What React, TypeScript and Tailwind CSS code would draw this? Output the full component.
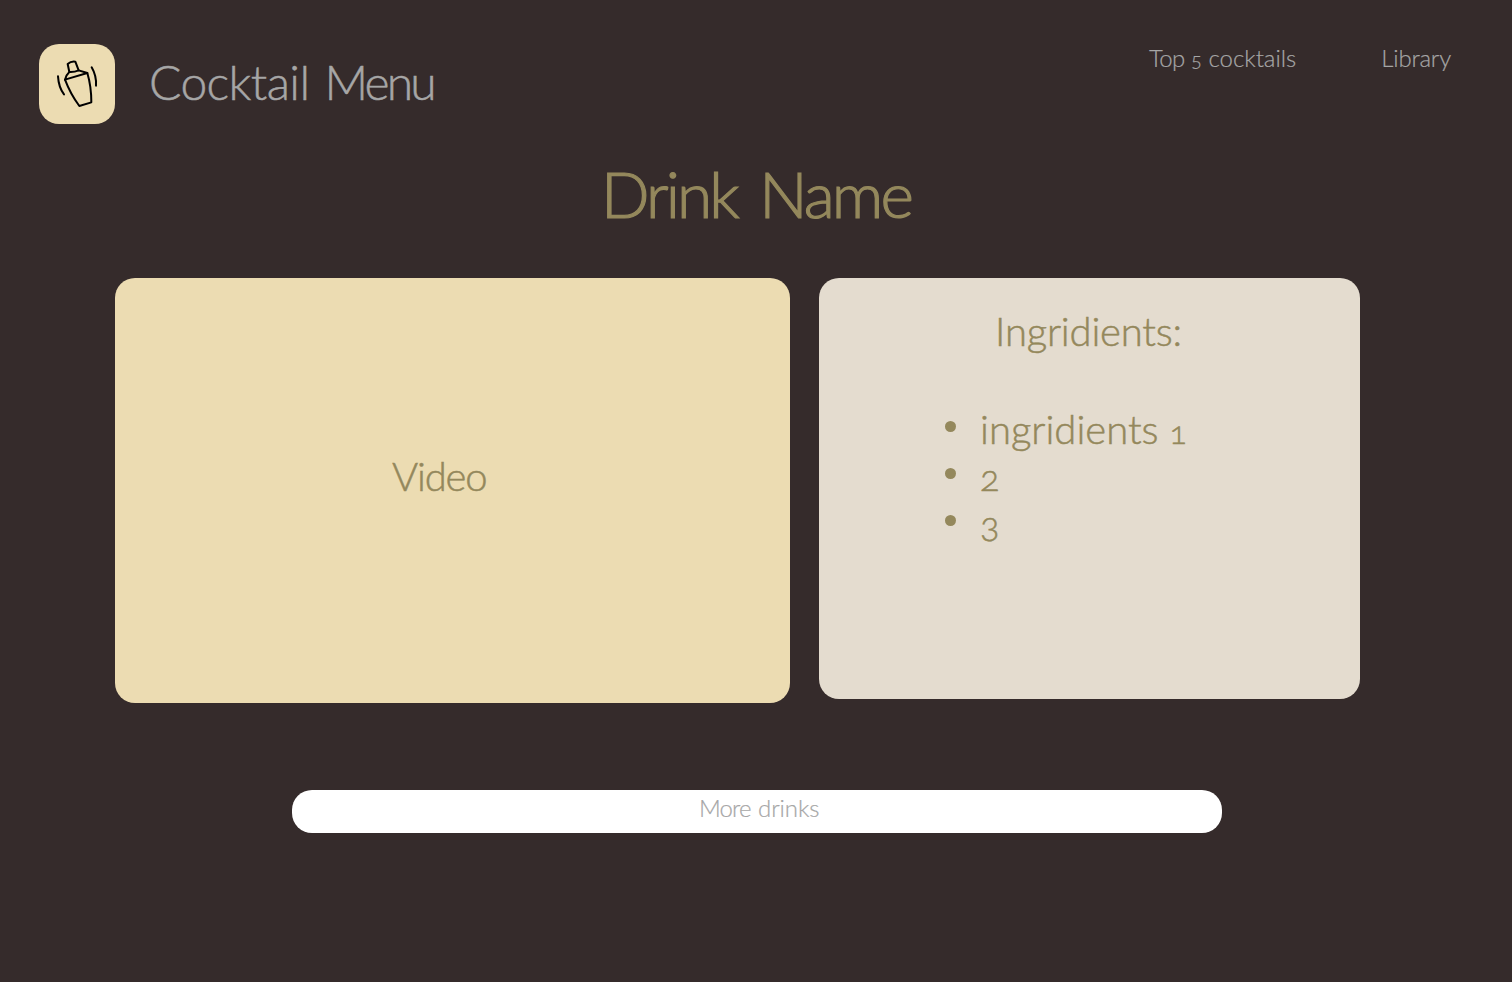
function ShakerIcon() {
  return (
    <svg viewBox="0 0 150 168" className="h-14 w-[50px]" fill="none" stroke="#000" strokeWidth="6" strokeLinecap="round" strokeLinejoin="round">
      <path d="M52 48 L47 24 Q57 15 70 17 L80 43" />
      <path d="M52 48 Q67 49 80 43 L106 51 L39 71 Q43 56 52 48" />
      <path d="M39 71 C50 100 64 126 82 150 L118 139 C118 105 114 78 106 51" />
      <path d="M18 61 Q20 94 36 115" />
      <path d="M119 34 Q134 60 132 89" />
    </svg>
  );
}

const ingredients = ["2", "3"];

export default function App() {
  return (
    <div className="min-h-[982px] w-full overflow-hidden bg-[#352b2b] font-['Lato',sans-serif] font-light whitespace-nowrap oldstyle-nums">
      <header className="flex items-start pt-11 pr-[61px] pl-[39px] text-[#a6a6a6]">
        <div className="flex h-20 w-[76px] items-start rounded-[20px] bg-[#ecdcb2] pt-3 pl-[13px]">
          <ShakerIcon />
        </div>
        <div className="mt-2.5 ml-[34px] text-5xl leading-[56px] [word-spacing:2px] [-webkit-text-stroke:0.5px_#a6a6a6]">
          <span className="tracking-[-0.6px]">Cocktail</span> <span className="tracking-[-2.8px]">Menu</span>
        </div>
        <nav className="ml-auto flex gap-[85px] text-2xl leading-7 [-webkit-text-stroke:0.2px_#a6a6a6]">
          <a>
            <span className="tracking-[-0.7px]">Top</span> <span className="text-xl leading-none">5</span> cocktails
          </a>
          <a className="tracking-[-0.2px]">Library</a>
        </nav>
      </header>
      <main className="text-[#94885c]">
        <h1 className="mt-8 pl-[601px] text-[64px] leading-[76px] font-light [word-spacing:5px] [-webkit-text-stroke:1.2px_#94885c]">
          <span className="tracking-[-2.9px]">Drink</span> <span className="tracking-[-2.8px]">Name</span>
        </h1>
        <div className="mt-[46px] flex items-start gap-[29px] pl-[115px] text-[40px] leading-[47px] [-webkit-text-stroke:0.5px_#94885c]">
          <section className="h-[425px] w-[675px] rounded-[20px] bg-[#ecdcb2] pt-[175px] pl-[277px] tracking-[-1.2px]">
            Video
          </section>
          <section className="h-[421px] w-[541px] rounded-[20px] bg-[#e4dccf] pt-[30px]">
            <h2 className="pl-[176px] font-light tracking-[-0.2px]">Ingridients:</h2>
            <ul className="mt-[51px] pl-[126px]">
              <li className="flex h-[47px] items-start gap-6">
                <span className="mt-[15px] size-[11px] rounded-full bg-[#94885c]" />
                <span>ingridients <span className="text-[32px] leading-none">1</span></span>
              </li>
              {ingredients.map((name) => (
                <li key={name} className="flex h-[47px] items-start gap-6">
                  <span className="mt-[15px] size-[11px] rounded-full bg-[#94885c]" />
                  <span><span className="text-4xl leading-none">{name}</span></span>
                </li>
              ))}
            </ul>
          </section>
        </div>
        <button className="mt-[87px] ml-[292px] flex h-[43px] w-[930px] items-start rounded-[20px] bg-white pt-1 pl-[407px] text-2xl leading-7 font-light text-[#a6a6a6] [word-spacing:1px] [-webkit-text-stroke:0.2px_#a6a6a6]">
          <span><span className="tracking-[-0.9px]">More</span> <span className="tracking-[-0.1px]">drinks</span></span>
        </button>
      </main>
    </div>
  );
}
